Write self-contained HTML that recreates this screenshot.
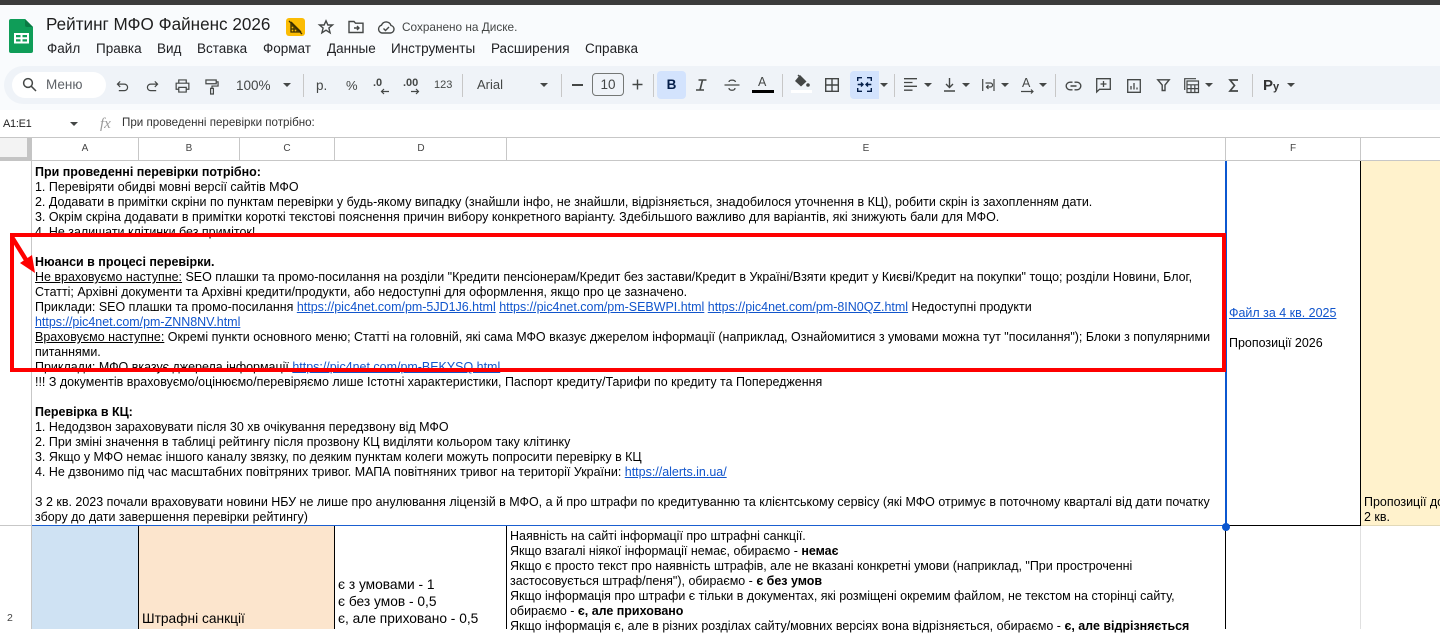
<!DOCTYPE html>
<html><head><meta charset="utf-8"><style>
*{box-sizing:border-box}
html,body{margin:0;padding:0;width:1440px;height:629px;overflow:hidden;background:#fff;font-family:"Liberation Sans",sans-serif;color:#000}
.a{position:absolute;white-space:nowrap}
.r{position:absolute;background:#c7c7c7}
.l{position:absolute;left:35px;white-space:nowrap;font-size:12.48px;line-height:15px;height:15px}
.e{position:absolute;left:510px;white-space:nowrap;font-size:12.48px;line-height:15px;height:15px}
a{color:#1155cc;text-decoration:underline}
.m{position:absolute;top:41px;font-size:13.5px;line-height:16px;color:#202124;white-space:nowrap}
.h{position:absolute;top:143px;font-size:10px;line-height:12px;color:#444;width:20px;text-align:center}
.s{position:absolute;top:74px;width:1px;height:23px;background:#c7c7c7}
.t{position:absolute;color:#444746;white-space:nowrap}
.c{position:absolute;width:0;height:0;border-left:4px solid transparent;border-right:4px solid transparent;border-top:4px solid #444746}
svg{position:absolute;overflow:visible}
</style></head><body>
<div class="a" style="left:0;top:0;width:1440px;height:5px;background:#3c3c3c"></div>
<div class="a" style="left:0;top:5px;width:1440px;height:105px;background:#f9fbfd"></div>
<div class="a" style="left:4px;top:66px;width:1436px;height:38px;background:#eff3f8;border-radius:19px 0 0 19px"></div>

<svg style="left:9px;top:19px" width="25" height="34" viewBox="0 0 25 34"><path d="M2 0H16L24 8V32a2 2 0 0 1-2 2H2a2 2 0 0 1-2-2V2a2 2 0 0 1 2-2z" fill="#0f9d58"/><path d="M16 0L24 8H18a2 2 0 0 1-2-2z" fill="#0a7a44"/><path d="M5 14H20V24.5H5zM7 16V18.3H11.5V16zM13.5 16V18.3H18V16zM7 20.2V22.5H11.5V20.2zM13.5 20.2V22.5H18V20.2z" fill="#fff" fill-rule="evenodd"/></svg>
<div class="a" style="left:46px;top:14px;font-size:17.1px;line-height:22px;color:#1f1f1f">Рейтинг МФО Файненс 2026</div>
<div class="a" style="left:286px;top:18px;width:19px;height:18px;background:#fbbc04;border-radius:3px"></div>
<svg style="left:286px;top:18px" width="19" height="18" viewBox="0 0 19 18" fill="none" stroke="#3c2f00" stroke-width="1.3"><path d="M5 4V14H15M5 4L15 14M8 7.5V14M11 10.5V14M3 3L16 16M5 8H9M5 11H12"/></svg>
<svg style="left:318px;top:19px" width="16" height="16" viewBox="0 0 16 16" fill="none" stroke="#444746" stroke-width="1.4"><path d="M8 1.8L9.9 6H14.5L10.9 9L12.1 13.8L8 11.2L3.9 13.8L5.1 9L1.5 6H6.1z"/></svg>
<svg style="left:348px;top:20px" width="16" height="14" viewBox="0 0 16 14" fill="none" stroke="#444746" stroke-width="1.4"><path d="M1 1.5H6L7.5 3.2H15V12.5H1zM6 8H10.5M9 6L11 8L9 10"/></svg>
<svg style="left:377px;top:20px" width="18" height="14" viewBox="0 0 18 14" fill="none" stroke="#444746" stroke-width="1.4"><path d="M5 13A4 4 0 0 1 4.5 5.2A5 5 0 0 1 14 5.5A3.8 3.8 0 0 1 13.5 13zM6.5 8.5L8.5 10.5L12 7"/></svg>
<div class="a" style="left:402px;top:20px;font-size:11.8px;line-height:15px;color:#444746">Сохранено на Диске.</div>

<div class="m" style="left:47px">Файл</div><div class="m" style="left:96px">Правка</div><div class="m" style="left:157px">Вид</div><div class="m" style="left:197px">Вставка</div><div class="m" style="left:263px">Формат</div><div class="m" style="left:327px">Данные</div><div class="m" style="left:391px">Инструменты</div><div class="m" style="left:491px">Расширения</div><div class="m" style="left:585px">Справка</div>

<div class="a" style="left:12px;top:72px;width:94px;height:26px;background:#fff;border-radius:13px"></div>
<svg style="left:22px;top:77px" width="15" height="15" viewBox="0 0 15 15" fill="none" stroke="#444746" stroke-width="1.5"><circle cx="6" cy="6" r="4.4"/><path d="M9.2 9.2L14 14"/></svg>
<div class="t" style="left:46px;top:77px;font-size:13.5px;line-height:15px;color:#5f6368">Меню</div>
<svg style="left:116px;top:80px" width="13" height="12" viewBox="0 0 14 13" fill="none" stroke="#444746" stroke-width="1.3"><path d="M4.5 1.5L1.5 4.5L4.5 7.5M1.5 4.5H9A3.5 3.5 0 0 1 9 11.5H3"/></svg>
<svg style="left:146px;top:80px" width="13" height="12" viewBox="0 0 14 13" fill="none" stroke="#444746" stroke-width="1.3"><path d="M9.5 1.5L12.5 4.5L9.5 7.5M12.5 4.5H5A3.5 3.5 0 0 0 5 11.5H11"/></svg>
<svg style="left:175px;top:79px" width="15" height="14" viewBox="0 0 16 15" fill="none" stroke="#444746" stroke-width="1.3"><path d="M4 4V1H12V4M4 11H1.2V4.5H14.8V11H12M4 9H12V14H4z"/></svg>
<svg style="left:205px;top:79px" width="14" height="16" viewBox="0 0 15 17" fill="none" stroke="#444746" stroke-width="1.3"><path d="M1 1H12V5H1zM12 3H14V7.5H7.5V10M6 10H9V16H6z"/></svg>
<div class="t" style="left:236px;top:77px;font-size:13.5px;line-height:17px">100%</div><div class="c" style="left:283px;top:83px"></div>
<div class="s" style="left:303px"></div>
<div class="t" style="left:316px;top:78px;font-size:13.5px;line-height:15px">р.</div>
<div class="t" style="left:346px;top:78px;font-size:13px;line-height:15px">%</div>
<div class="t" style="left:373px;top:76px;font-size:11px;font-weight:bold;line-height:14px">.0</div>
<svg style="left:380px;top:88px" width="10" height="7" viewBox="0 0 10 7" fill="none" stroke="#444746" stroke-width="1.2"><path d="M9 3.5H1.5M4 1L1.5 3.5L4 6"/></svg>
<div class="t" style="left:403px;top:76px;font-size:11px;font-weight:bold;line-height:14px">.00</div>
<svg style="left:410px;top:88px" width="10" height="7" viewBox="0 0 10 7" fill="none" stroke="#444746" stroke-width="1.2"><path d="M1 3.5H8.5M6 1L8.5 3.5L6 6"/></svg>
<div class="t" style="left:434px;top:78px;font-size:11px;line-height:15px">123</div>
<div class="s" style="left:462px"></div>
<div class="t" style="left:477px;top:77px;font-size:13px;line-height:16px">Arial</div><div class="c" style="left:540px;top:83px"></div>
<div class="s" style="left:561px"></div>
<div class="a" style="left:572px;top:84px;width:11px;height:1.5px;background:#444746"></div>
<div class="a" style="left:592px;top:73px;width:32px;height:23px;border:1px solid #747775;border-radius:4px;font-size:13.5px;line-height:21px;text-align:center;color:#444746">10</div>
<svg style="left:632px;top:79px" width="11" height="11" viewBox="0 0 11 11" stroke="#444746" stroke-width="1.4"><path d="M0.5 5.5H10.5M5.5 0.5V10.5"/></svg>
<div class="s" style="left:653px"></div>
<div class="a" style="left:657px;top:71px;width:29px;height:28px;background:#d3e3fd;border-radius:4px;color:#041e49;font-size:13.5px;font-weight:bold;line-height:28px;text-align:center">B</div>
<svg style="left:695px;top:79px" width="12" height="12" viewBox="0 0 12 12" fill="none" stroke="#444746" stroke-width="1.6"><path d="M3.5 1H11.5M1 11H9M7.5 1L5 11"/></svg>
<svg style="left:724px;top:78px" width="16" height="14" viewBox="0 0 16 14" fill="none" stroke="#444746" stroke-width="1.3"><path d="M0.5 7H15.5M11.5 4C11 1.5 5 1.5 5 4M5 10C5 13 11 13 11 10"/></svg>
<div class="t" style="left:758px;top:75px;font-size:12.5px;line-height:15px">A</div>
<div class="a" style="left:752px;top:90px;width:22px;height:3px;background:#000"></div>
<div class="s" style="left:782px"></div>
<svg style="left:793px;top:74px" width="17" height="15" viewBox="0 0 17 15"><path d="M7 1L13.5 7.5L8 12.5L2 7z" fill="#444746"/><path d="M5 1L7 3" stroke="#444746" stroke-width="1.4"/><circle cx="15" cy="11" r="1.8" fill="#444746"/></svg>
<div class="a" style="left:791px;top:90px;width:21px;height:3px;background:#fff"></div>
<svg style="left:825px;top:78px" width="14" height="14" viewBox="0 0 14 14" fill="none" stroke="#444746" stroke-width="1.4"><path d="M.7.7H13.3V13.3H.7zM7 .7V13.3M.7 7H13.3"/></svg>
<div class="a" style="left:850px;top:71px;width:29px;height:28px;background:#d3e3fd;border-radius:4px 0 0 4px"></div>
<svg style="left:857px;top:77px" width="15" height="15" viewBox="0 0 15 15" fill="none" stroke="#041e49" stroke-width="1.4"><path d="M.7 4V.7H5M10 .7H14.3V4M.7 11V14.3H5M10 14.3H14.3V11M.7 7.5H5.5M4 5.5L6 7.5L4 9.5M14.3 7.5H9.5M11 5.5L9 7.5L11 9.5"/></svg>
<div class="c" style="left:880px;top:83px"></div>
<div class="s" style="left:894px"></div>
<svg style="left:904px;top:78px" width="13" height="13" viewBox="0 0 13 13" stroke="#444746" stroke-width="1.3"><path d="M0 .7H13M0 4.5H8.5M0 8.3H13M0 12.2H8.5"/></svg>
<div class="c" style="left:924px;top:83px"></div>
<svg style="left:943px;top:78px" width="13" height="14" viewBox="0 0 13 14" fill="none" stroke="#444746" stroke-width="1.4"><path d="M6.5 0V9M3 6L6.5 9.5L10 6M1 13H12"/></svg>
<div class="c" style="left:962px;top:83px"></div>
<svg style="left:982px;top:79px" width="13" height="12" viewBox="0 0 13 12" fill="none" stroke="#444746" stroke-width="1.2"><path d="M.7 0V12M12 0V12M3.5 4H8.5A2 2 0 0 1 8.5 8H5M6.5 6L4.5 8L6.5 10"/></svg>
<div class="c" style="left:1001px;top:83px"></div>
<div class="t" style="left:1022px;top:76px;font-size:12.5px;line-height:15px">A</div>
<svg style="left:1021px;top:89px" width="13" height="5" viewBox="0 0 13 5" fill="none" stroke="#444746" stroke-width="1.2"><path d="M0 2.5H12M10 .5L12 2.5L10 4.5"/></svg>
<div class="c" style="left:1039px;top:83px"></div>
<div class="s" style="left:1055px"></div>
<svg style="left:1066px;top:81px" width="15" height="10" viewBox="0 0 15 10" fill="none" stroke="#444746" stroke-width="1.4"><path d="M6.5 1.2H4A3.8 3.8 0 0 0 4 8.8H6.5M8.5 1.2H11A3.8 3.8 0 0 1 11 8.8H8.5M4.5 5H10.5"/></svg>
<svg style="left:1096px;top:78px" width="15" height="15" viewBox="0 0 15 15" fill="none" stroke="#444746" stroke-width="1.3"><path d="M.7.7H14.3V11.3H3.5L.7 14zM7.5 3V9M4.5 6H10.5"/></svg>
<svg style="left:1127px;top:79px" width="14" height="14" viewBox="0 0 14 14" fill="none" stroke="#444746" stroke-width="1.3"><path d="M.7.7H13.3V13.3H.7zM4 7V10.5M7 4V10.5M10 8.5V10.5"/></svg>
<svg style="left:1157px;top:79px" width="13" height="12" viewBox="0 0 13 12" fill="none" stroke="#444746" stroke-width="1.4"><path d="M.8.8H12.2L8 6V11.5H5.2V6z"/></svg>
<svg style="left:1184px;top:78px" width="15" height="15" viewBox="0 0 15 15" fill="none" stroke="#444746" stroke-width="1.2"><path d="M.7 12V.7H12M3 3H14.5V14.5H3zM3 6.8H14.5M3 10.6H14.5M7 6.8V14.5M10.8 6.8V14.5"/></svg>
<div class="c" style="left:1205px;top:83px"></div>
<svg style="left:1229px;top:79px" width="9" height="13" viewBox="0 0 9 13" fill="none" stroke="#444746" stroke-width="1.7"><path d="M9 1H1L5.5 6.5L1 12H9"/></svg>
<div class="s" style="left:1252px"></div>
<div class="a" style="left:1263px;top:76px;font-size:15px;font-weight:bold;line-height:19px;color:#333">Р<span style="font-size:11px">у</span></div>
<div class="c" style="left:1287px;top:83px"></div>

<div class="a" style="left:3px;top:117px;font-size:11px;line-height:14px;letter-spacing:-.3px;color:#1f1f1f">A1:E1</div>
<div class="c" style="left:70px;top:122px"></div>
<div class="a" style="left:100px;top:115px;font-family:'Liberation Serif',serif;font-style:italic;font-size:15px;line-height:18px;color:#9a9a9a">fx</div>
<div class="a" style="left:122px;top:116px;font-size:11.6px;line-height:14px;color:#333">При проведенні перевірки потрібно:</div>

<div class="r" style="left:0;top:137px;width:1440px;height:1px"></div>
<div class="a" style="left:0;top:138px;width:27px;height:19px;background:#f3f3f3"></div>
<div class="a" style="left:27px;top:138px;width:5px;height:22px;background:#c4c4c4"></div>
<div class="a" style="left:0;top:157px;width:32px;height:3.5px;background:#c4c4c4"></div>
<div class="r" style="left:32px;width:1408px;height:1px;top:160px"></div>
<div class="r" style="left:138px;top:138px;width:1px;height:22px"></div><div class="r" style="left:239px;top:138px;width:1px;height:22px"></div><div class="r" style="left:334px;top:138px;width:1px;height:22px"></div><div class="r" style="left:506px;top:138px;width:1px;height:22px"></div><div class="r" style="left:1225px;top:138px;width:1px;height:22px"></div><div class="r" style="left:1360px;top:138px;width:1px;height:22px"></div>
<div class="h" style="left:75px">A</div><div class="h" style="left:179px">B</div><div class="h" style="left:277px">C</div><div class="h" style="left:411px">D</div><div class="h" style="left:856px">E</div><div class="h" style="left:1283px">F</div>

<div class="r" style="left:31px;top:161px;width:1px;height:468px"></div>
<div class="r" style="left:0;top:525px;width:32px;height:1px"></div>
<div class="a" style="left:1361px;top:161px;width:79px;height:364px;background:#fff2cc"></div>
<div class="a" style="left:32px;top:526px;width:106px;height:103px;background:#cfe2f3"></div>
<div class="a" style="left:139px;top:526px;width:195px;height:103px;background:#fce5cd"></div>
<div class="a" style="left:138px;top:526px;width:1px;height:103px;background:#000"></div>
<div class="a" style="left:334px;top:526px;width:1px;height:103px;background:#000"></div>
<div class="a" style="left:506px;top:526px;width:1px;height:103px;background:#000"></div>
<div class="a" style="left:1225px;top:526px;width:1px;height:103px;background:#000"></div>
<div class="a" style="left:1360px;top:161px;width:1px;height:364px;background:#000"></div>
<div class="a" style="left:1226px;top:525px;width:135px;height:1px;background:#000"></div>
<div class="a" style="left:1361px;top:525px;width:79px;height:1px;background:#e2d9b8"></div>
<div class="a" style="left:1360px;top:526px;width:1px;height:103px;background:#e0e0e0"></div>
<div class="a" style="left:32px;top:525px;width:1194px;height:1px;background:#1a5fd0"></div>
<div class="a" style="left:1224.5px;top:161px;width:2px;height:364px;background:#0b57d0"></div>
<div class="a" style="left:1222px;top:523px;width:8px;height:8px;border-radius:50%;background:#0b57d0"></div>

<div class="l" style="top:165px;font-weight:bold">При проведенні перевірки потрібно:</div>
<div class="l" style="top:180px">1. Перевіряти обидві мовні версії сайтів МФО</div>
<div class="l" style="top:195px">2. Додавати в примітки скріни по пунктам перевірки у будь-якому випадку (знайшли інфо, не знайшли, відрізняється, знадобилося уточнення в КЦ), робити скрін із захопленням дати.</div>
<div class="l" style="top:210px">3. Окрім скріна додавати в примітки короткі текстові пояснення причин вибору конкретного варіанту. Здебільшого важливо для варіантів, які знижують бали для МФО.</div>
<div class="l" style="top:225px">4. Не залишати клітинки без приміток!</div>
<div class="l" style="top:255px;font-weight:bold">Нюанси в процесі перевірки.</div>
<div class="l" style="top:270px"><u>Не враховуємо наступне:</u> SEO плашки та промо-посилання на розділи "Кредити пенсіонерам/Кредит без застави/Кредит в Україні/Взяти кредит у Києві/Кредит на покупки" тощо; розділи Новини, Блог,</div>
<div class="l" style="top:285px">Статті; Архівні документи та Архівні кредити/продукти, або недоступні для оформлення, якщо про це зазначено.</div>
<div class="l" style="top:300px">Приклади: SEO плашки та промо-посилання <a>https://pic4net.com/pm-5JD1J6.html</a> <a>https://pic4net.com/pm-SEBWPI.html</a> <a>https://pic4net.com/pm-8IN0QZ.html</a> Недоступні продукти</div>
<div class="l" style="top:315px"><a>https://pic4net.com/pm-ZNN8NV.html</a></div>
<div class="l" style="top:330px"><u>Враховуємо наступне:</u> Окремі пункти основного меню; Статті на головній, які сама МФО вказує джерелом інформації (наприклад, Ознайомитися з умовами можна тут "посилання"); Блоки з популярними</div>
<div class="l" style="top:345px">питаннями.</div>
<div class="l" style="top:360px">Приклади: МФО вказує джерела інформації <a>https://pic4net.com/pm-BEKYSQ.html</a></div>
<div class="l" style="top:375px">!!! З документів враховуємо/оцінюємо/перевіряємо лише Істотні характеристики, Паспорт кредиту/Тарифи по кредиту та Попередження</div>
<div class="l" style="top:405px;font-weight:bold">Перевірка в КЦ:</div>
<div class="l" style="top:420px">1. Недодзвон зараховувати після 30 хв очікування передзвону від МФО</div>
<div class="l" style="top:435px">2. При зміні значення в таблиці рейтингу після прозвону КЦ виділяти кольором таку клітинку</div>
<div class="l" style="top:450px">3. Якщо у МФО немає іншого каналу звязку, по деяким пунктам колеги можуть попросити перевірку в КЦ</div>
<div class="l" style="top:465px">4. Не дзвонимо під час масштабних повітряних тривог. МАПА повітняних тривог на території України: <a>https://alerts.in.ua/</a></div>
<div class="l" style="top:495px">З 2 кв. 2023 почали враховувати новини НБУ не лише про анулювання ліцензій в МФО, а й про штрафи по кредитуванню та клієнтському сервісу (які МФО отримує в поточному кварталі від дати початку</div>
<div class="l" style="top:510px">збору до дати завершення перевірки рейтингу)</div>

<div class="a" style="left:1229px;top:306px;font-size:12.48px;line-height:15px"><a>Файл за 4 кв. 2025</a></div>
<div class="a" style="left:1229px;top:336px;font-size:12.48px;line-height:15px">Пропозиції 2026</div>
<div class="a" style="left:1364px;top:495px;font-size:12.48px;line-height:15px">Пропозиції до</div>
<div class="a" style="left:1364px;top:510px;font-size:12.48px;line-height:15px">2 кв.</div>

<div class="a" style="left:7px;top:612px;font-size:10.5px;line-height:12px;color:#444">2</div>
<div class="a" style="left:142px;top:610px;font-size:13.75px;line-height:17px">Штрафні санкції</div>
<div class="a" style="left:338px;top:576px;font-size:13.75px;line-height:17px">є з умовами - 1</div>
<div class="a" style="left:338px;top:593px;font-size:13.75px;line-height:17px">є без умов - 0,5</div>
<div class="a" style="left:338px;top:610px;font-size:13.75px;line-height:17px">є, але приховано - 0,5</div>
<div class="e" style="top:529px">Наявність на сайті інформації про штрафні санкції.</div>
<div class="e" style="top:544px">Якщо взагалі ніякої інформації немає, обираємо - <b>немає</b></div>
<div class="e" style="top:559px">Якщо є просто текст про наявність штрафів, але не вказані конкретні умови (наприклад, "При простроченні</div>
<div class="e" style="top:574px">застосовується штраф/пеня"), обираємо - <b>є без умов</b></div>
<div class="e" style="top:589px">Якщо інформація про штрафи є тільки в документах, які розміщені окремим файлом, не текстом на сторінці сайту,</div>
<div class="e" style="top:604px">обираємо - <b>є, але приховано</b></div>
<div class="e" style="top:619px">Якщо інформація є, але в різних розділах сайту/мовних версіях вона відрізняється, обираємо - <b>є, але відрізняється</b></div>

<div class="a" style="left:10px;top:233px;width:1215.5px;height:139px;border:4px solid #fe0000;background:transparent"></div>
<svg style="left:0;top:0" width="60" height="290" viewBox="0 0 60 290"><path d="M12.5 238L28 263" stroke="#fe0000" stroke-width="4.5" fill="none"/><path d="M35 273L20 263L32 255z" fill="#fe0000"/></svg>
</body></html>
